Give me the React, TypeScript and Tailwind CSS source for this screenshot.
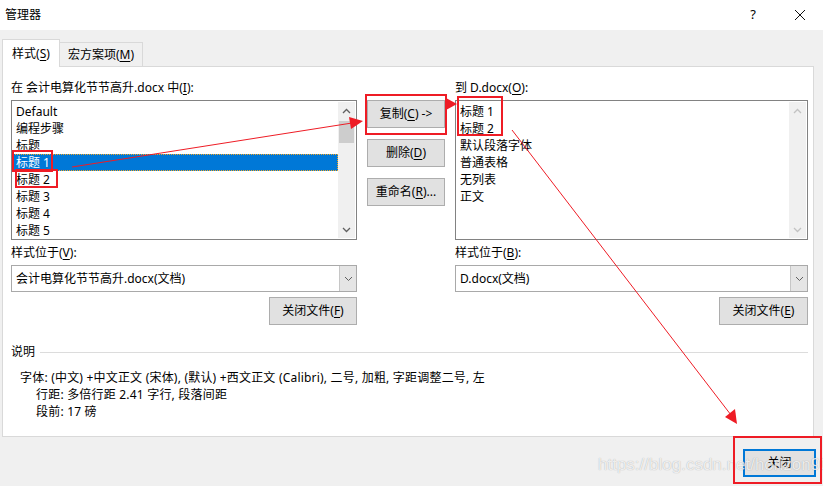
import React from "react";

const leftItems = ["Default", "编程步骤", "标题", "标题 1", "标题 2", "标题 3", "标题 4", "标题 5"];
const rightItems = ["标题 1", "标题 2", "默认段落字体", "普通表格", "无列表", "正文"];

function Key({ k }: { k: string }) {
  return <span className="underline underline-offset-2">{k}</span>;
}

function Chevron({ up, light }: { up?: boolean; light?: boolean }) {
  return (
    <svg width="9" height="6" viewBox="0 0 9 6" className={up ? "" : "rotate-180"}>
      <path d="M1 5 L4.5 1.5 L8 5" fill="none" stroke={light ? "#c2c2c2" : "#606060"} strokeWidth="1.3" />
    </svg>
  );
}

function ScrollBar({ enabled }: { enabled: boolean }) {
  return (
    <div className="w-[17px] h-full bg-[#f0f0f0] flex flex-col">
      <div className="h-[17px] flex items-center justify-center">
        <Chevron up light={!enabled} />
      </div>
      <div className="flex-1 pt-[2px]">
        {enabled && <div className="mx-[1px] h-[22px] bg-[#cdcdcd]" />}
      </div>
      <div className="h-[17px] flex items-center justify-center">
        <Chevron light={!enabled} />
      </div>
    </div>
  );
}

function Btn({ children, className = "" }: { children: React.ReactNode; className?: string }) {
  return (
    <div
      className={
        "h-[28px] bg-[#e1e1e1] border border-[#adadad] flex items-center justify-center text-[12px] " + className
      }
    >
      {children}
    </div>
  );
}

function Combo({ text }: { text: string }) {
  return (
    <div className="h-[27px] bg-white border border-[#a9a9a9] flex">
      <div className="flex-1 pl-[4px] flex items-center text-[12px]">{text}</div>
      <div className="w-[17px] bg-[#e5e5e5] border-l border-[#c6c6c6] flex items-center justify-center">
        <svg width="9" height="6" viewBox="0 0 9 6">
          <path d="M1 1 L4.5 4.5 L8 1" fill="none" stroke="#606060" strokeWidth="1" />
        </svg>
      </div>
    </div>
  );
}

export default function App() {
  return (
    <div className="relative w-[823px] h-[486px] bg-[#f0f0f0] overflow-hidden text-black font-['Noto_Sans','Noto_Sans_CJK_SC',sans-serif]">
      {/* title bar */}
      <div className="h-[30px] bg-white flex items-center text-[12px]">
        <span className="pl-[5px]">管理器</span>
        <span className="ml-auto mr-[38px] text-[13px]">?</span>
        <svg width="12" height="12" viewBox="0 0 12 12" className="mr-[17px]">
          <path d="M1 1 L11 11 M11 1 L1 11" stroke="#111" strokeWidth="1" />
        </svg>
      </div>

      {/* tabs */}
      <div className="flex items-end pl-[2px] pt-[9px] text-[12px]">
        <div className="relative z-10 w-[58px] h-[28px] -mb-[1px] bg-white border border-b-0 border-[#d9d9d9] flex items-center justify-center">
          样式(<Key k="S" />)
        </div>
        <div className="w-[83px] h-[25px] -mb-[1px] bg-[#f0f0f0] border border-l-0 border-[#d9d9d9] flex items-center justify-center">
          宏方案项(<Key k="M" />)
        </div>
      </div>

      {/* panel */}
      <div className="ml-[2px] w-[812px] h-[371px] bg-white border border-[#d9d9d9] pl-[8px] pr-[5px] pt-[13px] text-[12px]">
        <div className="flex gap-[10px]">
          {/* left column */}
          <div className="w-[346px]">
            <div className="h-[16px] leading-[16px]">
              在 会计电算化节节高升.docx 中(<Key k="I" />):
            </div>
            <div className="mt-[4px] h-[140px] border border-[#828282] flex p-[1px]">
              <div className="flex-1 pt-[1px]">
                {leftItems.map((t) =>
                  t === "标题 1" ? (
                    <div
                      key={t}
                      className="h-[17px] leading-[16px] pl-[2px] bg-[#0078d7] text-white border border-dotted border-[#f5a623]"
                    >
                      {t}
                    </div>
                  ) : (
                    <div key={t} className="h-[17px] leading-[17px] pl-[3px]">
                      {t}
                    </div>
                  )
                )}
              </div>
              <ScrollBar enabled />
            </div>
            <div className="mt-[5px] h-[16px] leading-[16px]">
              样式位于(<Key k="V" />):
            </div>
            <div className="mt-[4px]">
              <Combo text="会计电算化节节高升.docx(文档)" />
            </div>
            <div className="mt-[5px] flex justify-end">
              <Btn className="w-[88px]">
                关闭文件(<Key k="F" />)
              </Btn>
            </div>
          </div>

          {/* middle buttons */}
          <div className="w-[78px] pt-[20px] flex flex-col gap-[11px]">
            <Btn>
              复制(<Key k="C" />)&nbsp;-&gt;
            </Btn>
            <Btn>
              删除(<Key k="D" />)
            </Btn>
            <Btn>
              重命名(<Key k="R" />)...
            </Btn>
          </div>

          {/* right column */}
          <div className="w-[353px]">
            <div className="h-[16px] leading-[16px]">
              到 D.docx(<Key k="O" />):
            </div>
            <div className="mt-[4px] h-[140px] border border-[#828282] flex p-[1px]">
              <div className="flex-1 pt-[1px]">
                {rightItems.map((t) => (
                  <div key={t} className="h-[17px] leading-[17px] pl-[3px]">
                    {t}
                  </div>
                ))}
              </div>
              <ScrollBar enabled={false} />
            </div>
            <div className="mt-[5px] h-[16px] leading-[16px]">
              样式位于(<Key k="B" />):
            </div>
            <div className="mt-[4px]">
              <Combo text="D.docx(文档)" />
            </div>
            <div className="mt-[5px] flex justify-end">
              <Btn className="w-[89px]">
                关闭文件(<Key k="E" />)
              </Btn>
            </div>
          </div>
        </div>

        {/* description */}
        <div className="mt-[19px] flex items-center h-[16px]">
          <span>说明</span>
          <div className="flex-1 ml-[5px] h-px bg-[#dcdcdc]" />
        </div>
        <div className="mt-[9px] leading-[17px] tracking-[0.2px]">
          <div className="pl-[9px]">
            字体: (中文) +中文正文 (宋体), (默认) +西文正文 (Calibri), 二号, 加粗, 字距调整二号, 左
          </div>
          <div className="pl-[25px]">行距: 多倍行距 2.41 字行, 段落间距</div>
          <div className="pl-[25px]">段前: 17 磅</div>
        </div>
      </div>

      {/* footer */}
      <div className="flex justify-end pt-[12px] pr-[7px]">
        <div className="w-[73px] h-[28px] bg-[#e1e1e1] border-2 border-[#0078d7] flex items-center justify-center text-[12px]">
          关闭
        </div>
      </div>

      {/* watermark */}
      <div className="absolute left-[598px] top-[452px] text-[17px] font-['Liberation_Sans',sans-serif] text-white/80 [text-shadow:0_0_1px_rgba(0,0,0,0.35)] pointer-events-none">
        https://blog.csdn.net/horizon90
      </div>

      {/* red annotations */}
      <svg className="absolute inset-0 pointer-events-none" width="823" height="486" viewBox="0 0 823 486">
        <g fill="none" stroke="#ee1c25" strokeWidth="2">
          <rect x="13" y="151" width="39" height="20" />
          <rect x="16" y="170" width="41" height="17" />
          <rect x="366" y="95" width="80" height="39" />
          <rect x="458" y="97" width="44" height="38" />
          <rect x="734" y="437" width="87" height="46" />
        </g>
        <g stroke="#ee1c25" strokeWidth="1">
          <line x1="72" y1="167" x2="352" y2="123" />
          <line x1="512" y1="130" x2="731" y2="415" />
        </g>
        <g fill="#ee1c25">
          <polygon points="363,121 349,117 351,129" />
          <polygon points="457,104 446,98 446,110" />
          <polygon points="737,424 725,417 735,409" />
        </g>
      </svg>
    </div>
  );
}
